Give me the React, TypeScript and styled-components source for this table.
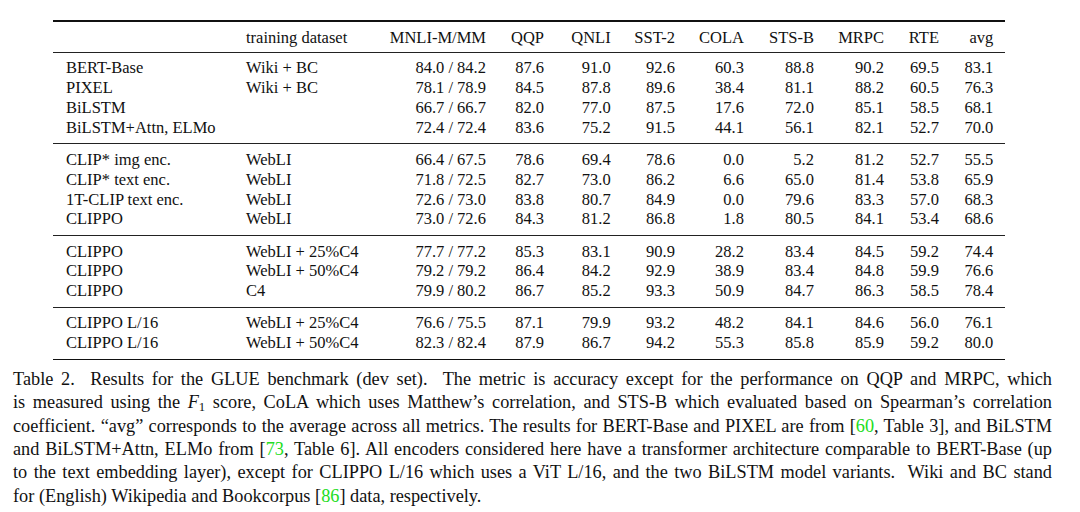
import styled, { createGlobalStyle } from "styled-components";

const GlobalStyle = createGlobalStyle`
  html, body {
    margin: 0;
    padding: 0;
    background: #ffffff;
  }
  body {
    width: 1080px;
    height: 512px;
    overflow: hidden;
    color: #111;
    font-family: "Liberation Serif", "Times New Roman", serif;
  }
`;

type Align = "left" | "right";

const COLUMNS = "180px 120px 120px 58px 66.7px 64.3px 69px 70px 70px 55px 54.3px";

const head = [
  "",
  "training dataset",
  "MNLI-M/MM",
  "QQP",
  "QNLI",
  "SST-2",
  "COLA",
  "STS-B",
  "MRPC",
  "RTE",
  "avg",
];

const groups: string[][][] = [
  [
    ["BERT-Base", "Wiki + BC", "84.0 / 84.2", "87.6", "91.0", "92.6", "60.3", "88.8", "90.2", "69.5", "83.1"],
    ["PIXEL", "Wiki + BC", "78.1 / 78.9", "84.5", "87.8", "89.6", "38.4", "81.1", "88.2", "60.5", "76.3"],
    ["BiLSTM", "", "66.7 / 66.7", "82.0", "77.0", "87.5", "17.6", "72.0", "85.1", "58.5", "68.1"],
    ["BiLSTM+Attn, ELMo", "", "72.4 / 72.4", "83.6", "75.2", "91.5", "44.1", "56.1", "82.1", "52.7", "70.0"],
  ],
  [
    ["CLIP* img enc.", "WebLI", "66.4 / 67.5", "78.6", "69.4", "78.6", "0.0", "5.2", "81.2", "52.7", "55.5"],
    ["CLIP* text enc.", "WebLI", "71.8 / 72.5", "82.7", "73.0", "86.2", "6.6", "65.0", "81.4", "53.8", "65.9"],
    ["1T-CLIP text enc.", "WebLI", "72.6 / 73.0", "83.8", "80.7", "84.9", "0.0", "79.6", "83.3", "57.0", "68.3"],
    ["CLIPPO", "WebLI", "73.0 / 72.6", "84.3", "81.2", "86.8", "1.8", "80.5", "84.1", "53.4", "68.6"],
  ],
  [
    ["CLIPPO", "WebLI + 25%C4", "77.7 / 77.2", "85.3", "83.1", "90.9", "28.2", "83.4", "84.5", "59.2", "74.4"],
    ["CLIPPO", "WebLI + 50%C4", "79.2 / 79.2", "86.4", "84.2", "92.9", "38.9", "83.4", "84.8", "59.9", "76.6"],
    ["CLIPPO", "C4", "79.9 / 80.2", "86.7", "85.2", "93.3", "50.9", "84.7", "86.3", "58.5", "78.4"],
  ],
  [
    ["CLIPPO L/16", "WebLI + 25%C4", "76.6 / 75.5", "87.1", "79.9", "93.2", "48.2", "84.1", "84.6", "56.0", "76.1"],
    ["CLIPPO L/16", "WebLI + 50%C4", "82.3 / 82.4", "87.9", "86.7", "94.2", "55.3", "85.8", "85.9", "59.2", "80.0"],
  ],
];

const alignOf = (i: number): Align => (i < 2 ? "left" : "right");

export default function App() {
  return (
    <>
      <GlobalStyle />
      <Figure>
        <Table>
          <HeadSection>
            <Row>
              {head.map((h, i) => (
                <Cell key={i} $align={alignOf(i)}>
                  {h}
                </Cell>
              ))}
            </Row>
          </HeadSection>

          {groups.map((rows, g) => (
            <Group key={g}>
              {rows.map((cells, r) => (
                <Row key={r}>
                  {cells.map((c, i) => (
                    <Cell key={i} $align={alignOf(i)}>
                      {c}
                    </Cell>
                  ))}
                </Row>
              ))}
            </Group>
          ))}
        </Table>

        <Caption>
          <Line>
            Table 2.{"\u00a0"} Results for the GLUE benchmark (dev set).{"\u00a0"} The metric is accuracy
            except for the performance on QQP and MRPC, which
          </Line>
          <Line>
            is measured using the <Var>F</Var>
            <Sub>1</Sub> score, CoLA which uses Matthew’s correlation, and STS-B which evaluated
            based on Spearman’s correlation
          </Line>
          <Line>
            coefficient. “avg” corresponds to the average across all metrics. The results for
            BERT-Base and PIXEL are from [<Cite>60</Cite>, Table 3], and BiLSTM
          </Line>
          <Line>
            and BiLSTM+Attn, ELMo from [<Cite>73</Cite>, Table 6]. All encoders considered here
            have a transformer architecture comparable to BERT-Base (up
          </Line>
          <Line>
            to the text embedding layer), except for CLIPPO L/16 which uses a ViT L/16, and the two
            BiLSTM model variants.{"\u00a0"} Wiki and BC stand
          </Line>
          <LastLine>
            for (English) Wikipedia and Bookcorpus [<Cite>86</Cite>] data, respectively.
          </LastLine>
        </Caption>
      </Figure>
    </>
  );
}

const Figure = styled.div`
  display: flex;
  flex-direction: column;
  padding-top: 20px;
`;

const Table = styled.div`
  margin-left: 53px;
  width: 952px;
  border-top: 2px solid #111;
  border-bottom: 1.5px solid #111;
  font-size: 16.5px;
`;

const HeadSection = styled.div`
  padding: 6px 0 4px;
  border-bottom: 1px solid #222;
`;

const Group = styled.div`
  padding: 5.6px 0 5.8px;

  & + & {
    border-top: 1px solid #222;
  }
`;

const Row = styled.div`
  display: grid;
  grid-template-columns: ${COLUMNS};
  padding: 0 11.7px 0 13px;
  height: 19.8px;
  line-height: 19.8px;
`;

const Cell = styled.span<{ $align: Align }>`
  text-align: ${(p) => p.$align};
  white-space: nowrap;
`;

const Caption = styled.div`
  display: flex;
  flex-direction: column;
  margin: 8px 28px 0 13px;
  font-size: 18.3px;
  line-height: 23.4px;
`;

const Line = styled.span`
  display: block;
  text-align: justify;
  text-align-last: justify;
`;

const LastLine = styled(Line)`
  text-align-last: left;
`;

const Var = styled.i`
  font-style: italic;
`;

const Sub = styled.sub`
  font-size: 0.7em;
  line-height: 0;
  vertical-align: -0.25em;
`;

const Cite = styled.span`
  color: #22dd22;
`;
